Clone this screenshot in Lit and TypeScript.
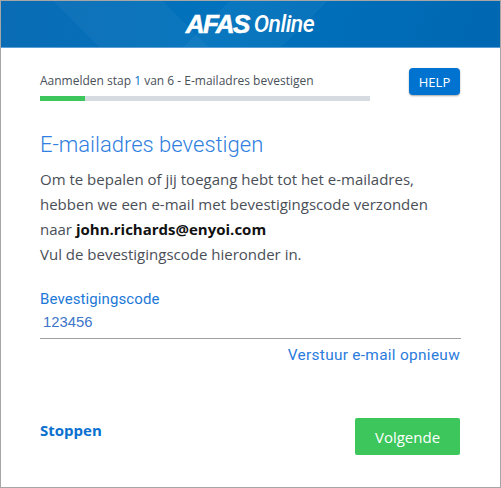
import { LitElement, html, css } from "lit";
import { customElement } from "lit/decorators.js";

@customElement("app-root")
export class AppRoot extends LitElement {
  static styles = css`
    :host { display: block; width: 501px; height: 488px; font-family: "Open Sans", sans-serif; }
    .card { box-sizing: border-box; width: 501px; height: 488px; border: 1px solid #a6a6a6; background: #fff; display: flex; flex-direction: column; }
    .head { height: 47px; flex: none; box-sizing: border-box; background:
        linear-gradient(135deg, transparent 0 42%, rgba(255,255,255,.035) 42% 60%, transparent 60%),
        linear-gradient(45deg, transparent 0 18%, rgba(255,255,255,.035) 18% 38%, transparent 38%),
        linear-gradient(100deg, #0a6cb4 0%, #0072bd 45%, #0067b2 100%);
      border-bottom: 1px solid #5a9fd6; display: flex; align-items: center; justify-content: center; color: #fff; gap: 5px; overflow: hidden; padding-right: 1px; }
    .afas { font: italic 700 26px/1 "Liberation Sans", sans-serif; letter-spacing: -1.6px; -webkit-text-stroke: .6px #fff; }
    .online { font: italic 500 23px/1 "Roboto", sans-serif; letter-spacing: -.5px; }
    .body { padding: 20px 40px 0 39px; flex: 1; display: flex; flex-direction: column; }
    .top { display: flex; justify-content: space-between; align-items: flex-start; height: 34px; }
    .steps { width: 330px; padding-top: 5px; }
    .steptxt { font-size: 12px; line-height: 15px; color: #48505a; white-space: nowrap; }
    .steptxt b { font-weight: 400; color: #0072cc; }
    .bar { margin-top: 8px; height: 5px; background: #d5dbe0; }
    .fill { height: 100%; width: 45px; background: #3dc65c; }
    .help { box-sizing: border-box; width: 51px; height: 27px; border-radius: 4px; background: #0073d1; color: #fff; font-size: 13px; box-shadow: 0 1px 2px rgba(0,0,0,.35); display: flex; align-items: center; justify-content: center; }
    h1 { margin: 28px 0 0; font: 300 22px/30px "Roboto", sans-serif; color: #2f80e0; }
    .text { margin-top: 7px; font-size: 15px; line-height: 25px; color: #4a4f57; white-space: nowrap; }
    .text strong { color: #111; font-weight: 700; }
    .label { margin-top: 22px; font: 400 15px/20px "Roboto", sans-serif; color: #1c78d8; letter-spacing: .1px; }
    .value { margin-top: 3px; padding: 0 0 6px 3px; font: 400 14.8px/20px "Liberation Sans", sans-serif; color: #3d74c8; border-bottom: 1px solid #a0a0a0; width: 421px; box-sizing: border-box; }
    .resend { margin-top: 6px; text-align: right; font: 400 15.4px/20px "Roboto", sans-serif; color: #2a7bdc; letter-spacing: .3px; }
    .foot { margin-top: 53px; display: flex; justify-content: space-between; align-items: flex-start; }
    .stop { margin-top: 1px; font-weight: 700; font-size: 15px; line-height: 22px; color: #0a70cf; }
    .next { width: 105px; height: 37px; border-radius: 2px; background: #3dc65c; color: #fff; font-size: 15px; display: flex; align-items: center; justify-content: center; }
  `;
  render() {
    return html`<div class="card">
      <div class="head"><span class="afas">AFAS</span><span class="online">Online</span></div>
      <div class="body">
        <div class="top">
          <div class="steps">
            <div class="steptxt">Aanmelden stap <b>1</b> van 6 - E-mailadres bevestigen</div>
            <div class="bar"><div class="fill"></div></div>
          </div>
          <div class="help">HELP</div>
        </div>
        <h1>E-mailadres bevestigen</h1>
        <div class="text">Om te bepalen of jij toegang hebt tot het e-mailadres,<br>hebben we een e-mail met bevestigingscode verzonden<br>naar <strong>john.richards@enyoi.com</strong><br>Vul de bevestigingscode hieronder in.</div>
        <div class="label">Bevestigingscode</div>
        <div class="value">123456</div>
        <div class="resend">Verstuur e-mail opnieuw</div>
        <div class="foot">
          <div class="stop">Stoppen</div>
          <div class="next">Volgende</div>
        </div>
      </div>
    </div>`;
  }
}
